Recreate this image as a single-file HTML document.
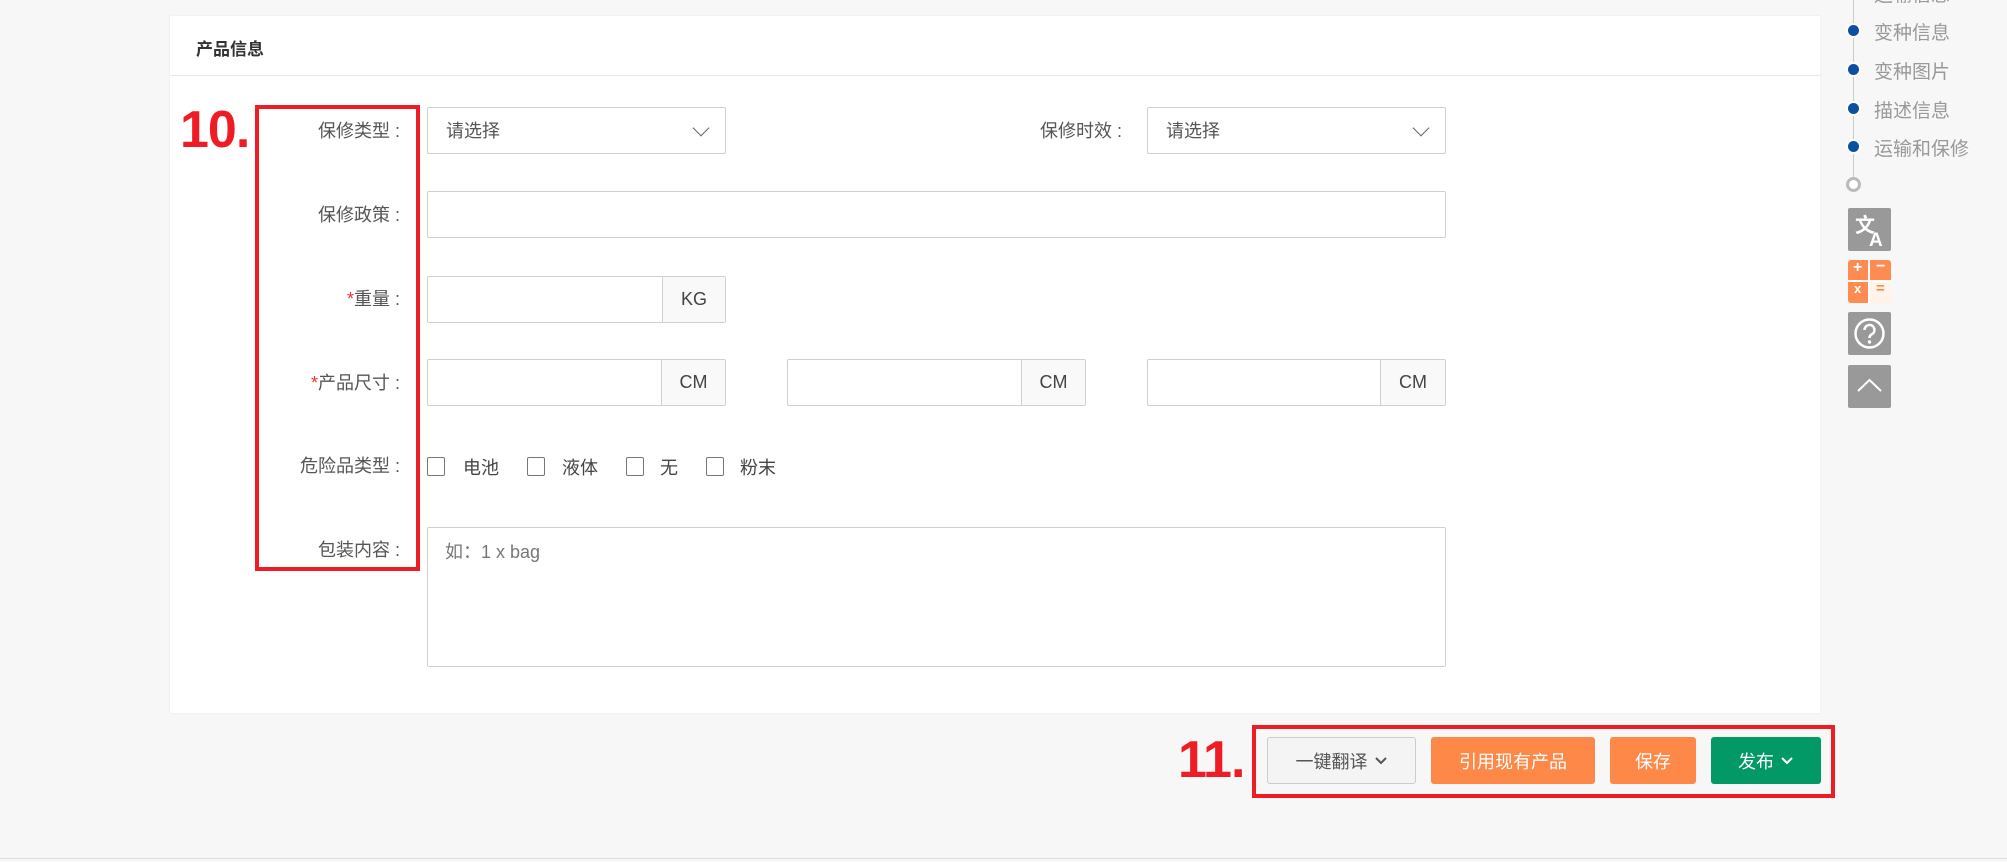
<!DOCTYPE html>
<html><head><meta charset="utf-8"><style>
*{box-sizing:border-box;margin:0;padding:0}
body{width:2007px;height:862px;background:#f7f7f7;font-family:"Liberation Sans","Noto Sans CJK SC",sans-serif;position:relative;overflow:hidden;color:#555}
.a{position:absolute}
.card{left:170px;top:16px;width:1650px;height:697px;background:#fff;box-shadow:0 0 2px #e6e6e6}
.hd{left:170px;top:16px;width:1650px;height:60px;border-bottom:1px solid #e8e8e8;font-weight:bold;font-size:17px;color:#333;padding:19px 0 0 26px}
.lbl{font-size:18px;color:#555;text-align:right;width:200px;line-height:22px}
.in{border:1px solid #d0d0d0;border-radius:2px;background:#fff}
.ad{position:absolute;top:0;right:0;bottom:0;border-left:1px solid #d0d0d0;background:#f9f9f9;font-size:18px;color:#444;display:flex;align-items:center;justify-content:center}
.sel{font-size:18px;color:#555;padding:9px 0 0 18px}
.chev{position:absolute;right:18px;top:14px;width:12px;height:12px;border-right:1.5px solid #666;border-bottom:1.5px solid #666;transform:rotate(45deg)}
.cb{width:18px;height:19px;border:1.5px solid #777;border-radius:2px;background:#fff}
.ct{font-size:18px;color:#444}
.red{border:4px solid #ee1c25}
.num{color:#ee1c25;font-weight:bold;font-size:52px;letter-spacing:-1px}
.btn{border-radius:3px;font-size:18px;display:flex;align-items:center;justify-content:center}
.nav{font-size:19px;color:#999;left:1874px}
.dot{left:1848px;width:11px;height:11px;border-radius:50%;background:#0b4ea2;box-shadow:0 0 0 2px #fff}
.ic{left:1848px;width:43px;height:43px;background:#999;border-radius:2px}
</style></head><body>
<div class="a card"></div>
<div class="a hd">产品信息</div>

<div class="a num" style="left:180px;top:100px">10.</div>
<div class="a red" style="left:255px;top:105px;width:165px;height:466px"></div>

<div class="a lbl" style="left:200px;top:120px">保修类型 :</div>
<div class="a in sel" style="left:427px;top:107px;width:299px;height:47px">请选择<div class="chev"></div></div>
<div class="a lbl" style="left:922px;top:120px">保修时效 :</div>
<div class="a in sel" style="left:1147px;top:107px;width:299px;height:47px">请选择<div class="chev"></div></div>

<div class="a lbl" style="left:200px;top:204px">保修政策 :</div>
<div class="a in" style="left:427px;top:191px;width:1019px;height:47px"></div>

<div class="a lbl" style="left:200px;top:288px"><span style="color:#e33">*</span>重量 :</div>
<div class="a in" style="left:427px;top:276px;width:299px;height:47px"><div class="ad" style="width:63px">KG</div></div>

<div class="a lbl" style="left:200px;top:372px"><span style="color:#e33">*</span>产品尺寸 :</div>
<div class="a in" style="left:427px;top:359px;width:299px;height:47px"><div class="ad" style="width:64px">CM</div></div>
<div class="a in" style="left:787px;top:359px;width:299px;height:47px"><div class="ad" style="width:64px">CM</div></div>
<div class="a in" style="left:1147px;top:359px;width:299px;height:47px"><div class="ad" style="width:65px">CM</div></div>

<div class="a lbl" style="left:200px;top:455px">危险品类型 :</div>
<div class="a cb" style="left:427px;top:457px"></div><div class="a ct" style="left:463px;top:454px">电池</div>
<div class="a cb" style="left:527px;top:457px"></div><div class="a ct" style="left:562px;top:454px">液体</div>
<div class="a cb" style="left:626px;top:457px"></div><div class="a ct" style="left:660px;top:454px">无</div>
<div class="a cb" style="left:706px;top:457px"></div><div class="a ct" style="left:740px;top:454px">粉末</div>

<div class="a lbl" style="left:200px;top:539px">包装内容 :</div>
<div class="a in" style="left:427px;top:527px;width:1019px;height:140px;font-size:18px;color:#777;padding:10px 0 0 17px">如：1 x bag</div>

<div class="a num" style="left:1178px;top:730px">11.</div>
<div class="a red" style="left:1252px;top:725px;width:583px;height:73px"></div>
<div class="a btn" style="left:1267px;top:737px;width:149px;height:47px;background:#f4f4f4;border:1px solid #ccc;color:#555">一键翻译 <svg width="14" height="10" style="margin-left:6px"><path d="M2 2l5 5 5-5" stroke="#555" stroke-width="2" fill="none"/></svg></div>
<div class="a btn" style="left:1431px;top:737px;width:164px;height:47px;background:#fe8847;color:#fff">引用现有产品</div>
<div class="a btn" style="left:1610px;top:737px;width:86px;height:47px;background:#fe8847;color:#fff">保存</div>
<div class="a btn" style="left:1711px;top:737px;width:110px;height:47px;background:#029966;color:#fff">发布 <svg width="14" height="10" style="margin-left:6px"><path d="M2 2l5 5 5-5" stroke="#fff" stroke-width="2" fill="none"/></svg></div>

<div class="a" style="left:0;top:858px;width:2007px;height:1px;background:#ddd"></div>

<!-- right nav -->
<div class="a" style="left:1853px;top:0;width:1px;height:185px;background:#ccc"></div>
<div class="a nav" style="top:-20px">运输信息</div>
<div class="a dot" style="top:25px"></div><div class="a nav" style="top:18px">变种信息</div>
<div class="a dot" style="top:64px"></div><div class="a nav" style="top:57px">变种图片</div>
<div class="a dot" style="top:103px"></div><div class="a nav" style="top:96px">描述信息</div>
<div class="a dot" style="top:141px"></div><div class="a nav" style="top:134px">运输和保修</div>
<div class="a" style="left:1846px;top:177px;width:15px;height:15px;border-radius:50%;border:3px solid #bbb;background:#fff"></div>
<div class="a ic" style="top:208px"><svg width="43" height="43"><text x="7" y="24" font-size="20" fill="#fff" font-family="Liberation Sans,Noto Sans CJK SC,sans-serif" font-weight="bold">文</text><text x="21" y="38" font-size="19" fill="#fff" font-family="Liberation Sans,sans-serif" font-weight="bold">A</text></svg></div>
<div class="a" style="left:1848px;top:260px;width:43px;height:43px;border-radius:3px;overflow:hidden;background:#fe8c52">
<div class="a" style="left:22px;top:22px;width:21px;height:21px;background:#fff3ea"></div>
<div class="a" style="left:20px;top:0;width:2px;height:43px;background:#fff"></div>
<div class="a" style="left:0;top:20px;width:43px;height:2px;background:#fff"></div>
<div class="a" style="left:5px;top:-1px;color:#fff;font-weight:bold;font-size:16px">+</div>
<div class="a" style="left:28px;top:-2px;color:#fff;font-weight:bold;font-size:16px">−</div>
<div class="a" style="left:6px;top:21px;color:#fff;font-weight:bold;font-size:13px">x</div>
<div class="a" style="left:28px;top:20px;color:#fe8c52;font-weight:bold;font-size:15px">=</div>
</div>
<div class="a ic" style="top:312px"><svg width="43" height="43"><circle cx="21.5" cy="21.5" r="14" stroke="#fff" stroke-width="2.5" fill="none"/><path d="M16.5 18a5 5 0 1 1 7 4.5c-1.5.8-2 1.6-2 3.5" stroke="#fff" stroke-width="2.5" fill="none"/><circle cx="21.5" cy="30" r="1.7" fill="#fff"/></svg></div>
<div class="a ic" style="top:365px"><svg width="43" height="43"><path d="M10 26l11.5-11 11.5 11" stroke="#fff" stroke-width="2" fill="none"/></svg></div>
</body></html>
